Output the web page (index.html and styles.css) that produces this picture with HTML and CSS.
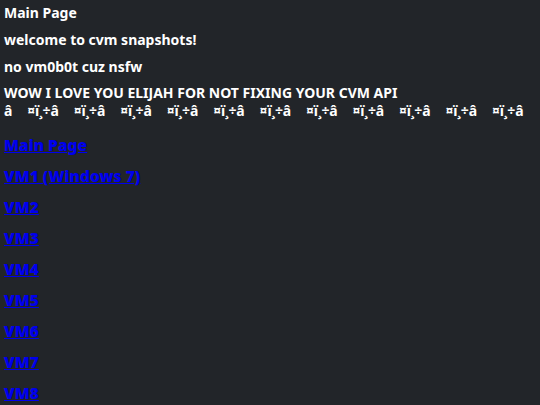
FILE: index.html
```html
<!DOCTYPE html>
<html>
<head>
<meta charset="utf-8">
<link rel="stylesheet" href="styles.css">
</head>
<body>
<div class="page">
  <p class="line">Main Page</p>
  <p class="line">welcome to cvm snapshots!</p>
  <p class="line">no vm0b0t cuz nsfw</p>
  <p class="shout">WOW I LOVE YOU ELIJAH FOR NOT FIXING YOUR CVM API<br><span class="hearts">â<span class="gap">&#x9d;</span>¤ï¸÷â<span class="gap">&#x9d;</span>¤ï¸÷â<span class="gap">&#x9d;</span>¤ï¸÷â<span class="gap">&#x9d;</span>¤ï¸÷â<span class="gap">&#x9d;</span>¤ï¸÷â<span class="gap">&#x9d;</span>¤ï¸÷â<span class="gap">&#x9d;</span>¤ï¸÷â<span class="gap">&#x9d;</span>¤ï¸÷â<span class="gap">&#x9d;</span>¤ï¸÷â<span class="gap">&#x9d;</span>¤ï¸÷â<span class="gap">&#x9d;</span>¤ï¸÷â</span></p>
  <nav class="links">
    <a href="#">Main Page</a>
    <a href="#">VM1 (Windows 7)</a>
    <a href="#">VM2</a>
    <a href="#">VM3</a>
    <a href="#">VM4</a>
    <a href="#">VM5</a>
    <a href="#">VM6</a>
    <a href="#">VM7</a>
    <a href="#">VM8</a>
  </nav>
</div>
</body>
</html>
```
FILE: styles.css
```css
html, body {
  margin: 0;
  background: #222529;
}
.page {
  padding: 3px 4px;
  color: #ffffff;
  font-family: "Noto Sans", "Open Sans", sans-serif;
  font-weight: 700;
  font-size: 14px;
  overflow: hidden;
}
.line {
  margin: 0 0 8px;
  line-height: 19px;
}
.shout {
  margin: 8px 0 0;
  line-height: 18px;
  white-space: nowrap;
}
.hearts {
  letter-spacing: -0.15px;
}
.gap {
  letter-spacing: 7px;
}
.links {
  display: flex;
  flex-direction: column;
  align-items: flex-start;
  gap: 12px;
  margin-top: 16px;
}
.links a {
  color: #0000ee;
  font-size: 15.5px;
  font-weight: 900;
  line-height: 19px;
  text-decoration: underline;
}
```
